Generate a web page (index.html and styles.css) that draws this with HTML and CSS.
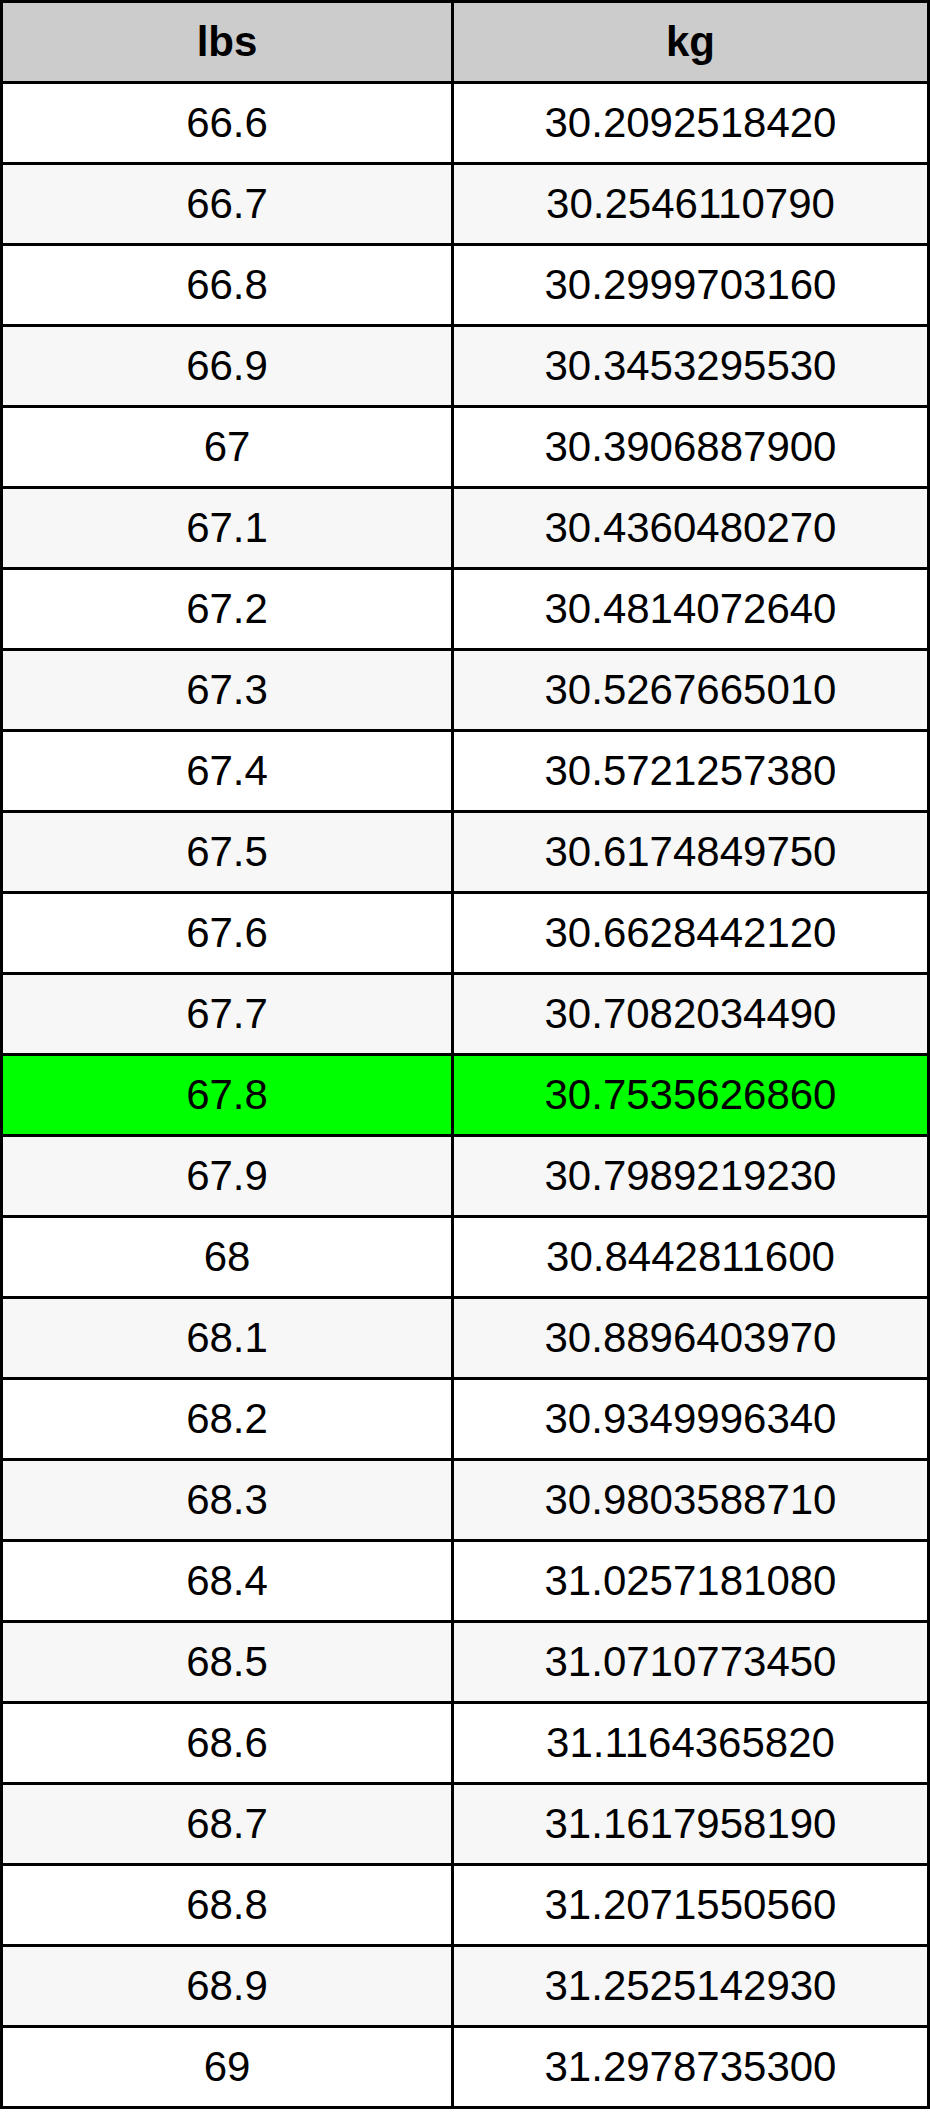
FILE: index.html
```html
<!DOCTYPE html>
<html>
<head>
<meta charset="utf-8">
<link rel="stylesheet" href="styles.css">
</head>
<body>
<table class="conv">
<thead>
<tr><th class="c1">lbs</th><th class="c2">kg</th></tr>
</thead>
<tbody>
<tr><td>66.6</td><td>30.2092518420</td></tr>
<tr><td>66.7</td><td>30.2546110790</td></tr>
<tr><td>66.8</td><td>30.2999703160</td></tr>
<tr><td>66.9</td><td>30.3453295530</td></tr>
<tr><td>67</td><td>30.3906887900</td></tr>
<tr><td>67.1</td><td>30.4360480270</td></tr>
<tr><td>67.2</td><td>30.4814072640</td></tr>
<tr><td>67.3</td><td>30.5267665010</td></tr>
<tr><td>67.4</td><td>30.5721257380</td></tr>
<tr><td>67.5</td><td>30.6174849750</td></tr>
<tr><td>67.6</td><td>30.6628442120</td></tr>
<tr><td>67.7</td><td>30.7082034490</td></tr>
<tr class="hl"><td>67.8</td><td>30.7535626860</td></tr>
<tr><td>67.9</td><td>30.7989219230</td></tr>
<tr><td>68</td><td>30.8442811600</td></tr>
<tr><td>68.1</td><td>30.8896403970</td></tr>
<tr><td>68.2</td><td>30.9349996340</td></tr>
<tr><td>68.3</td><td>30.9803588710</td></tr>
<tr><td>68.4</td><td>31.0257181080</td></tr>
<tr><td>68.5</td><td>31.0710773450</td></tr>
<tr><td>68.6</td><td>31.1164365820</td></tr>
<tr><td>68.7</td><td>31.1617958190</td></tr>
<tr><td>68.8</td><td>31.2071550560</td></tr>
<tr><td>68.9</td><td>31.2525142930</td></tr>
<tr><td>69</td><td>31.2978735300</td></tr>
</tbody>
</table>
</body>
</html>
```
FILE: styles.css
```css
html, body {
  margin: 0;
  padding: 0;
  background: #ffffff;
}

.conv {
  width: 930px;
  table-layout: fixed;
  border-collapse: separate;
  border-spacing: 0;
  border-top: 3px solid #000;
  border-left: 3px solid #000;
  font-family: "Liberation Sans", Arial, sans-serif;
  font-size: 42px;
  color: #000;
}

.conv th,
.conv td {
  padding: 0;
  height: 78px;
  text-align: center;
  vertical-align: middle;
  border-right: 3px solid #000;
  border-bottom: 3px solid #000;
  line-height: normal;
}

.conv th {
  background: #cccccc;
  font-weight: bold;
}

.conv .c1 {
  width: 448px;
}

.conv .c2 {
  width: 473px;
}

.conv tbody tr:nth-child(odd) td {
  background: #ffffff;
}

.conv tbody tr:nth-child(even) td {
  background: #f7f7f7;
}

.conv tbody tr.hl td {
  background: #00ff00;
}
```
